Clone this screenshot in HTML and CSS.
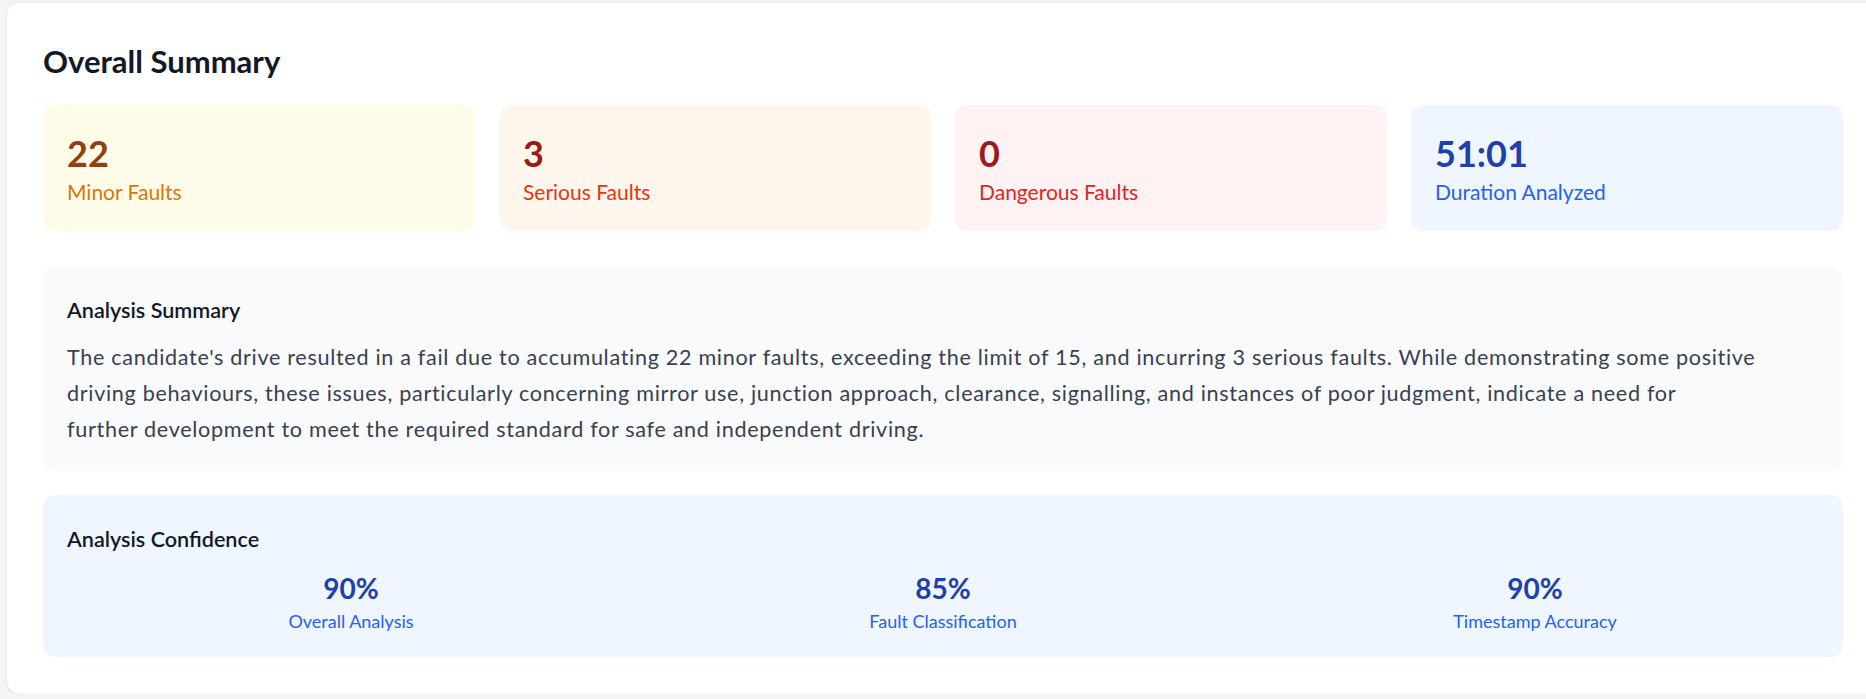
FILE: index.html
```html
<!DOCTYPE html>
<html>
    <head>
        <meta charset="utf-8">
        <title>Overall Summary</title>
        <link rel="stylesheet" href="styles.css">
    </head>
    <body>
        <div class="panel">
            <h2 class="title">Overall Summary</h2>

            <div class="stats">
                <div class="stat minor">
                    <div class="num">22</div>
                    <div class="lbl">Minor Faults</div>
                </div>
                <div class="stat serious">
                    <div class="num">3</div>
                    <div class="lbl">Serious Faults</div>
                </div>
                <div class="stat danger">
                    <div class="num">0</div>
                    <div class="lbl">Dangerous Faults</div>
                </div>
                <div class="stat duration">
                    <div class="num">51:01</div>
                    <div class="lbl">Duration Analyzed</div>
                </div>
            </div>

            <div class="box summary">
                <h3>Analysis Summary</h3>
                <p>The candidate's drive resulted in a fail due to accumulating 22 minor faults, exceeding the limit of 15, and incurring 3 serious faults. While demonstrating some positive driving behaviours, these issues, particularly concerning mirror use, junction approach, clearance, signalling, and instances of poor judgment, indicate a need for<br>further development to meet the required standard for safe and independent driving.</p>
            </div>

            <div class="box confidence">
                <h3>Analysis Confidence</h3>
                <div class="conf-grid">
                    <div class="conf">
                        <div class="pct">90%</div>
                        <div class="what">Overall Analysis</div>
                    </div>
                    <div class="conf">
                        <div class="pct">85%</div>
                        <div class="what">Fault Classification</div>
                    </div>
                    <div class="conf">
                        <div class="pct">90%</div>
                        <div class="what">Timestamp Accuracy</div>
                    </div>
                </div>
            </div>
        </div>
    </body>
</html>
```

FILE: styles.css
```css
body {
    margin: 0;
    background-color: #f3f4f6;
    font-family: Lato, "Noto Sans", sans-serif;
    overflow: hidden;
}

.panel {
    margin: 3px 0 0 7px;
    width: 1800px;
    padding: 36px;
    background-color: white;
    border-radius: 12px;
    box-shadow: 0 1px 3px rgba(0, 0, 0, 0.12);
}

.title {
    margin: 4px 0 26px 0;
    font-size: 31px;
    line-height: 36px;
    font-weight: 700;
    color: #111827;
}

.stats {
    display: grid;
    grid-template-columns: repeat(4, 1fr);
    gap: 24px;
    margin-bottom: 36px;
}

.stat {
    height: 126px;
    box-sizing: border-box;
    padding: 27px 24px 0 24px;
    border-radius: 12px;
}
.stat .num {font-size: 36px; line-height: 43px; font-weight: 700;}
.stat .lbl {font-size: 21px; line-height: 33px;}

.minor {background-color: #fefce8;}
.minor .num {color: #92400e;}
.minor .lbl {color: #d97706;}
.serious {background-color: #fff7ed;}
.serious .num {color: #9a1c10;}
.serious .lbl {color: #e5360c;}
.danger {background-color: #fef2f2;}
.danger .num {color: #991b1b;}
.danger .lbl {color: #dc2626;}
.duration {background-color: #eff6ff;}
.duration .num {color: #1e40af;}
.duration .lbl {color: #2563eb;}

.box {
    padding: 26px 24px 24px 24px;
    border-radius: 12px;
}
.box h3 {
    margin: 0 0 12px 0;
    font-size: 21.6px;
    line-height: 34px;
    font-weight: 600;
    color: #111827;
}

.summary {
    background-color: #f9fafb;
    margin-bottom: 24px;
}
.summary p {
    margin: 0;
    font-size: 21.6px;
    line-height: 36px;
    letter-spacing: 0.68px;
    color: #374151;
}

.confidence {
    background-color: #eff6ff;
    padding-top: 27px;
    padding-bottom: 22px;
}
.confidence h3 {margin-bottom: 13px;}

.conf-grid {
    display: grid;
    grid-template-columns: repeat(3, 1fr);
    gap: 24px;
    text-align: center;
}
.conf .pct {font-size: 28px; line-height: 38px; font-weight: 700; color: #1e40af;}
.conf .what {font-size: 18px; line-height: 28px; color: #2563eb;}
```
